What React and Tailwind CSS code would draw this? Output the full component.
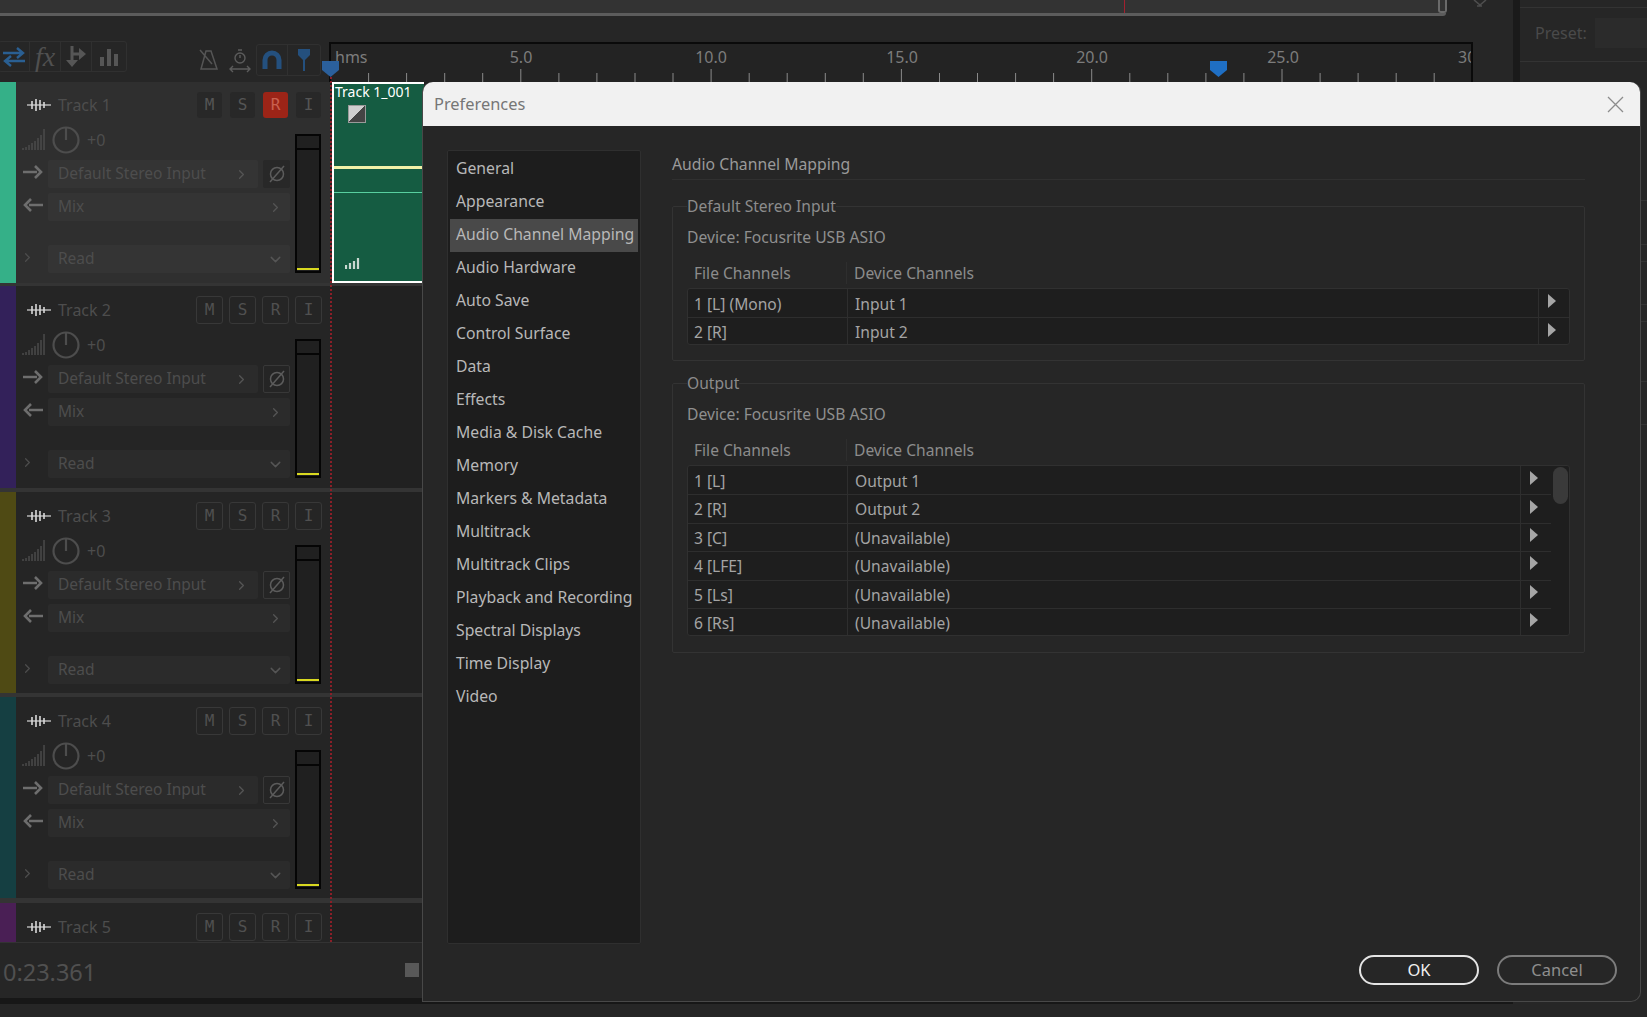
import React from "react";
import { ChevronRight, ChevronDown } from "lucide-react";

const prefs = ["General","Appearance","Audio Channel Mapping","Audio Hardware","Auto Save","Control Surface","Data","Effects","Media & Disk Cache","Memory","Markers & Metadata","Multitrack","Multitrack Clips","Playback and Recording","Spectral Displays","Time Display","Video"];

function Wave() {
  return (
    <svg width="24" height="14" viewBox="0 0 24 14" className="shrink-0">
      <path d="M0 7H24" stroke="#d8d8d8" strokeWidth="1.2" />
      <path d="M5 3V11M9 1V13M13 2V12M17 4V10" stroke="#d8d8d8" strokeWidth="1.6" />
    </svg>
  );
}
function Stairs() {
  return (
    <svg width="24" height="23" viewBox="0 0 24 23" className="shrink-0">
      <path d="M1 22V20M4 22V19M7 22V17M10 22V15M13 22V13M16 22V10M19 22V7M22 22V1" stroke="#4d4d4d" strokeWidth="1.4" />
    </svg>
  );
}
function Knob() {
  return (
    <svg width="28" height="28" viewBox="0 0 28 28" className="shrink-0">
      <circle cx="14" cy="14" r="12.5" fill="none" stroke="#4d4d4d" strokeWidth="2.2" />
      <path d="M14 2V14" stroke="#4d4d4d" strokeWidth="2.2" />
    </svg>
  );
}
function Arrow({ left }) {
  return (
    <svg width="20" height="14" viewBox="0 0 20 14" className="mb-[4px] shrink-0">
      {left ? <path d="M20 7H6M8 1L2 7L8 13" fill="none" stroke="#6e6e6e" strokeWidth="2.6" /> : <path d="M0 7H14M12 1L18 7L12 13" fill="none" stroke="#6e6e6e" strokeWidth="2.6" />}
    </svg>
  );
}
function Phase() {
  return (
    <svg width="18" height="18" viewBox="0 0 18 18">
      <circle cx="9" cy="9" r="6.5" fill="none" stroke="#5c5c5c" strokeWidth="1.5" />
      <path d="M2 17L16 1" stroke="#5c5c5c" strokeWidth="1.5" />
    </svg>
  );
}

function MsriButton({ label, active, armed }) {
  const font = "font-['DejaVu_Sans_Mono',monospace] text-[16px]";
  if (armed) return <div className={"mx-[1px] flex h-[26px] w-[25px] items-center justify-center rounded-[3px] bg-[#9c2417] text-[#c9604f] " + font}>{label}</div>;
  if (active) return <div className={"mx-[1px] flex h-[26px] w-[25px] items-center justify-center rounded-[3px] bg-[#282828] text-[#555555] " + font}>{label}</div>;
  return <div className={"flex h-[28px] w-[27px] items-center justify-center rounded-[3px] border border-[#383838] text-[#505050] " + font}>{label}</div>;
}

function Track({ name, color, height, active, compact, children }) {
  const field = active ? "bg-[#343434]" : "bg-[#2b2b2b]";
  return (
    <div className={"shrink-0 overflow-hidden " + height}>
      <div className="flex h-full">
        <div className={"w-[16px] shrink-0 " + color} />
        <div className={"w-[314px] shrink-0 overflow-hidden pl-[7px] " + (active ? "bg-[#2f2f2f] pt-[9px]" : "bg-[#252525] pt-[10px]")}>
          <div className="flex h-[28px] items-center">
            <div className="ml-[4px]"><Wave /></div>
            <div className="ml-[7px] flex-1 text-[16px] text-[#4d4d4d]">{name}</div>
            <div className="flex gap-[6px] pr-[8px]">
              <MsriButton label="M" active={active} />
              <MsriButton label="S" active={active} />
              <MsriButton label="R" active={active} armed={active} />
              <MsriButton label="I" active={active} />
            </div>
          </div>
          {!compact && (
            <div className="flex">
              <div className="w-[267px] shrink-0">
                <div className="flex h-[41px] items-center">
                  <div className="ml-[-1px]"><Stairs /></div>
                  <div className="ml-[6px]"><Knob /></div>
                  <div className="ml-[7px] text-[16px] text-[#4d4d4d]">+0</div>
                </div>
                <div className="flex h-[28px] items-center">
                  <Arrow />
                  <div className={"ml-[5px] flex h-[28px] w-[210px] items-center justify-between rounded-[2px] pl-[10px] pr-[9px] text-[15.5px] text-[#4d4d4d] " + field}>
                    <span>Default Stereo Input</span>
                    <ChevronRight size={15} color="#555555" />
                  </div>
                  <div className={"ml-[5px] flex h-[28px] w-[27px] items-center justify-center rounded-[2px] " + (active ? "bg-[#282828]" : "border border-[#383838]")}><Phase /></div>
                </div>
                <div className="mt-[5px] flex h-[28px] items-center">
                  <Arrow left />
                  <div className={"ml-[5px] flex h-[28px] w-[243px] items-center justify-between rounded-[2px] pl-[10px] pr-[7px] text-[15.5px] text-[#4d4d4d] " + field}>
                    <span>Mix</span>
                    <ChevronRight size={15} color="#555555" />
                  </div>
                </div>
                <div className="mt-[24px] flex h-[28px] items-center">
                  <ChevronRight size={15} color="#4d4d4d" className="ml-[-3px] mb-[4px]" />
                  <div className={"ml-[13px] flex h-[28px] w-[243px] items-center justify-between rounded-[2px] pl-[10px] pr-[6px] text-[15.5px] text-[#4d4d4d] " + field}>
                    <span>Read</span>
                    <ChevronDown size={17} color="#555555" />
                  </div>
                </div>
              </div>
              <div className="ml-[5px] mt-[15px] flex h-[139px] w-[26px] shrink-0 flex-col border-2 border-[#050505] bg-[#202020]">
                <div className="box-content h-[12px] border-b-2 border-[#050505]" />
                <div className="flex-1" />
                <div className="mb-[1px] h-[2px] bg-[#d8d820]" />
              </div>
            </div>
          )}
        </div>
        <div className="relative min-w-0 flex-1 bg-[#212121]">{children}</div>
      </div>
    </div>
  );
}

function Sep({ h }) {
  return <div className={"shrink-0 bg-[#343434] " + h} />;
}

function ArrowCell({ className }) {
  return (
    <div className={"flex items-center justify-start border-l border-[#2e2e2e] " + className}>
      <svg width="8" height="14" viewBox="0 0 8 14" className="mb-[5px]"><path d="M0 0L8 7L0 14Z" fill="#a6a6a6" /></svg>
    </div>
  );
}

function MapTable({ rows, arrowW, scroll, h }) {
  return (
    <div className={"relative mt-[4px] overflow-hidden rounded-[3px] border border-[#303030] bg-[#1e1e1e] " + h}>
      <div className={scroll ? "mr-[18px]" : ""}>
        {rows.map((r, i) => (
          <div key={r[0]} className={"flex h-[28.4px] items-center text-[15.6px] text-[#a4a4a4] " + (i ? "border-t border-[#2e2e2e]" : "")}>
            <div className="flex h-full w-[159px] shrink-0 items-center pl-[6px] pt-[2px]">{r[0]}</div>
            <div className="flex h-full min-w-0 flex-1 items-center border-l border-[#2e2e2e] pl-[7px] pt-[2px]">{r[1]}</div>
            <ArrowCell className={"h-full shrink-0 " + arrowW} />
          </div>
        ))}
      </div>
      {scroll && <div className="absolute right-[1px] top-[1px] h-[37px] w-[15px] rounded-full bg-[#3a3a3a]" />}
    </div>
  );
}

function Group({ legend, rows, arrowW, scroll, h, tableH, mt }) {
  return (
    <fieldset className={"rounded-[2px] border border-[#333333] px-[14px] " + h + " " + mt}>
      <legend className="text-[15.6px] leading-[22px] text-[#8c8c8c]">{legend}</legend>
      <div className="mt-[9px] text-[15.7px] leading-[22px] text-[#8f8f8f]">Device: Focusrite USB ASIO</div>
      <div className="mt-[14px] flex h-[22px] text-[15.6px] leading-[22px] text-[#8c8c8c]">
        <div className="w-[159px] pl-[7px]">File Channels</div>
        <div className="border-l border-[#2e2e2e] pl-[7px]">Device Channels</div>
      </div>
      <MapTable rows={rows} arrowW={arrowW} scroll={scroll} h={tableH} />
    </fieldset>
  );
}

export default function App() {
  const ticks = Array.from({ length: 30 }, (_, i) => i + 1);
  return (
    <div className="relative flex h-[1017px] w-[1647px] flex-col overflow-hidden bg-[#262626] font-['Noto_Sans',sans-serif]">
      <div className="flex min-h-0 flex-1">
        {/* left work area */}
        <div className="flex w-[1513px] shrink-0 flex-col">
          {/* top scroll strip */}
          <div className="relative h-[16px] shrink-0 bg-[#262626]">
            <div className="h-[16px] w-[1446px] rounded-br-[3px] border-b-[3px] border-[#5c5c5c] bg-[#333333]" />
            <div className="absolute left-[1124px] top-0 h-[13px] w-[1px] bg-[#a3202f]" />
            <div className="absolute left-[1438px] top-0 h-[13px] w-[9px] rounded-b-[3px] border-x-2 border-b-2 border-[#6a6a6a]" />
            <svg width="16" height="8" viewBox="0 0 16 8" className="absolute left-[1472px] top-0"><path d="M2 0L8 5L14 0M5 6H10" stroke="#4e4e4e" strokeWidth="1.6" fill="none" /></svg>
          </div>
          {/* toolbar + ruler */}
          <div className="flex h-[66px] shrink-0">
            <div className="relative w-[329px] shrink-0">
              <div className="absolute left-[-2px] top-[25px] flex h-[31px] rounded-[3px] border border-[#303030]">
                <div className="flex w-[31px] items-center justify-center border-r border-[#303030]">
                  <svg width="24" height="22" viewBox="0 0 24 22"><path d="M1 7H20M15 2L21 7L15 12" fill="none" stroke="#2a5f92" strokeWidth="2.4" /><path d="M23 15H4M9 10L3 15L9 20" fill="none" stroke="#2a5f92" strokeWidth="2.4" /></svg>
                </div>
                <div className="flex w-[31px] items-center justify-center border-r border-[#303030] font-['Liberation_Serif',serif] text-[28px] italic text-[#505050]">fx</div>
                <div className="flex w-[31px] items-center justify-center border-r border-[#303030]">
                  <svg width="22" height="22" viewBox="0 0 22 22"><path d="M7 0V17" stroke="#565656" strokeWidth="3" /><path d="M1 14L7 21L13 14Z" fill="#565656" /><path d="M7 8H15" stroke="#565656" strokeWidth="3" /><path d="M14 2L21 8L14 14Z" fill="#565656" /></svg>
                </div>
                <div className="flex w-[34px] items-center justify-center">
                  <svg width="18" height="18" viewBox="0 0 18 18"><path d="M0 9H4V18H0ZM7 1H11V18H7ZM14 6H18V18H14Z" fill="#565656" /></svg>
                </div>
              </div>
              <svg width="20" height="22" viewBox="0 0 20 22" className="absolute left-[199px] top-[33px]"><path d="M7 2H12L18 20H2Z M1 1L13 15" fill="none" stroke="#555555" strokeWidth="1.5" /></svg>
              <svg width="22" height="24" viewBox="0 0 22 24" className="absolute left-[229px] top-[33px]"><circle cx="11" cy="9" r="5" fill="none" stroke="#5c5c5c" strokeWidth="1.4" /><path d="M9 1H13M11 6V9M1 20H21M4 17L1 20L4 23M18 17L21 20L18 23" fill="none" stroke="#5c5c5c" strokeWidth="1.4" /></svg>
              <div className="absolute left-[256px] top-[28px] flex h-[32px] rounded-[3px] border border-[#303030]">
                <div className="flex w-[31px] items-center justify-center border-r border-[#303030]">
                  <svg width="20" height="20" viewBox="0 0 20 20"><path d="M3 19V10A7 7 0 0 1 17 10V19" fill="none" stroke="#24507e" strokeWidth="5" /></svg>
                </div>
                <div className="flex w-[32px] items-center justify-center">
                  <svg width="14" height="22" viewBox="0 0 14 22"><path d="M1 0H13V6L8 11H6L1 6Z" fill="#24507e" /><path d="M7 10V22" stroke="#24507e" strokeWidth="2" /></svg>
                </div>
              </div>
            </div>
            <div className="relative mt-[26px] h-[40px] w-[1144px] shrink-0 border-x-[2px] border-t-[2px] border-x-[#0a0a0a] border-t-[#0a0a0a] bg-[#232323] text-[16px] text-[#7c7c7c]">
              <span className="absolute left-[4px] top-[1px]">hms</span>
              {[["5.0", 190], ["10.0", 380], ["15.0", 571], ["20.0", 761], ["25.0", 952]].map(([t, x]) => (
                <span key={t} className="absolute top-[1px] w-[60px] -translate-x-1/2 text-center" style={{ left: x }}>{t}</span>
              ))}
              <span className="absolute right-0 top-[1px] w-[13px] overflow-hidden">30</span>
              <svg width="1140" height="14" viewBox="0 0 1140 14" className="absolute bottom-0 left-0">
                {ticks.map((k) => (
                  <path key={k} d={`M${(k * 38.06 - 0.5).toFixed(1)} ${k % 5 === 0 ? 1 : 5}V14`} stroke="#8a8a8a" strokeWidth="1" />
                ))}
              </svg>
            </div>
          </div>
          {/* tracks */}
          <div className="flex h-[860px] shrink-0 flex-col overflow-hidden">
            <Track name="Track 1" color="bg-[#35b088]" height="h-[201px]" active>
              <div className="relative ml-[2px] h-full w-[92px] border-y-2 border-l-2 border-white bg-[#155c42]">
                <div className="absolute left-[1px] top-[-2px] whitespace-nowrap text-[14px] leading-[20px] text-white">Track 1_001</div>
                <div className="absolute left-[14px] top-[21px] h-[18px] w-[18px] border border-[#9a9a9a] bg-[linear-gradient(135deg,#cfcfcf_50%,#444444_50%)]" />
                <div className="absolute left-0 top-[82px] h-[3px] w-full bg-[#f1f1a8]" />
                <div className="absolute left-0 top-[108px] h-[1px] w-full bg-[#58d0a0]" />
                <svg width="16" height="12" viewBox="0 0 16 12" className="absolute bottom-[12px] left-[11px]"><path d="M1 12V8M5 12V6M9 12V4M13 12V1" stroke="#c8d8d0" strokeWidth="2.2" /></svg>
              </div>
            </Track>
            <Sep h="h-[3px]" />
            <Track name="Track 2" color="bg-[#33215a]" height="h-[202px]" />
            <Sep h="h-[4px]" />
            <Track name="Track 3" color="bg-[#4f4a14]" height="h-[201px]" />
            <Sep h="h-[4px]" />
            <Track name="Track 4" color="bg-[#153f42]" height="h-[201px]" />
            <Sep h="h-[5px]" />
            <Track name="Track 5" color="bg-[#4a1f55]" height="h-[39px]" compact />
          </div>
          {/* time */}
          <div className="flex h-[56px] shrink-0 items-center justify-between border-t border-[#333333] bg-[#262626] pl-[3px]">
            <span className="pt-[4px] text-[23.5px] text-[#505050]">0:23.361</span>
            <div className="mb-[2px] mr-[1094px] h-[14px] w-[14px] bg-[#585858]" />
          </div>
          <div className="h-[6px] shrink-0 bg-[#171717]" />
          <div className="flex-1 bg-[#262626]" />
        </div>
        {/* divider and right panel */}
        <div className="h-[82px] w-[7px] shrink-0 bg-[#1a1a1a]" />
        <div className="flex-1">
          <div className="mt-[7px] flex h-[55px] items-center border-y border-[#333333] pb-[3px] pl-[15px] text-[16px] text-[#4a4a4a]">
            <span>Preset:</span>
            <div className="ml-[8px] h-[30px] flex-1 bg-[#2b2b2b]" />
          </div>
          <div className="h-[139px] border-b border-[#333333]" />
          <div className="h-[44px] border-b border-[#333333]" />
          <div className="h-[17px] border-b border-[#333333]" />
          <div className="h-[43px] border-b border-[#333333]" />
          <div className="h-[17px] border-b border-[#333333]" />
          <div className="h-[60px] border-b border-[#333333]" />
          <div className="h-[43px] border-b border-[#333333]" />
        </div>
      </div>

      {/* playhead */}
      <div className="absolute left-[330px] top-[74px] h-[868px] border-l-[2px] border-dotted border-[#8a1f28]" />
      <svg width="17" height="16" viewBox="0 0 17 16" className="absolute left-[322px] top-[61px]"><path d="M0 0H17V9L8.5 16L0 9Z" fill="#2b609c" /></svg>
      <svg width="17" height="16" viewBox="0 0 17 16" className="absolute left-[1210px] top-[61px]"><path d="M0 0H17V9L8.5 16L0 9Z" fill="#1f6fc4" /></svg>

      {/* dialog */}
      <div className="absolute left-[422px] top-[82px] flex h-[920px] w-[1219px] flex-col rounded-t-[10px] rounded-br-[10px] border-x border-b border-[#484848] bg-[#262626]">
        <div className="flex h-[44px] shrink-0 items-center justify-between rounded-t-[10px] bg-[#f1f1f1] pl-[11px] pr-[16px]">
          <span className="text-[16.4px] text-[#767676]">Preferences</span>
          <svg width="17" height="17" viewBox="0 0 17 17"><path d="M1 1L16 16M16 1L1 16" stroke="#8c8c8c" strokeWidth="1.3" /></svg>
        </div>
        <div className="flex pl-[24px] pt-[24px]">
          <div className="h-[794px] w-[194px] shrink-0 rounded-[2px] border border-[#2f2f2f] bg-[#1d1d1d] p-[2px]">
            {prefs.map((p) => (
              <div key={p} className={"flex h-[33px] items-center whitespace-nowrap pb-[2px] pl-[6px] text-[15.75px] text-[#b8b8b8] " + (p === "Audio Channel Mapping" ? "bg-[#494949]" : "")}>{p}</div>
            ))}
          </div>
          <div className="ml-[31px] w-[913px] shrink-0">
            <div className="flex h-[30px] items-center border-b border-[#303030] text-[15.75px] text-[#9a9a9a]">Audio Channel Mapping</div>
            <Group
              legend="Default Stereo Input"
              mt="mt-[15px]"
              h="h-[166px]"
              tableH="h-[57px] w-[883px]"
              arrowW="w-[31px] pl-[9px]"
              rows={[["1 [L] (Mono)", "Input 1"], ["2 [R]", "Input 2"]]}
            />
            <Group
              legend="Output"
              mt="mt-[11px]"
              h="h-[281px]"
              tableH="h-[171px] w-[883px]"
              arrowW="w-[31px] pl-[9px]"
              scroll
              rows={[["1 [L]", "Output 1"], ["2 [R]", "Output 2"], ["3 [C]", "(Unavailable)"], ["4 [LFE]", "(Unavailable)"], ["5 [Ls]", "(Unavailable)"], ["6 [Rs]", "(Unavailable)"]]}
            />
          </div>
        </div>
        <div className="mt-[11px] flex justify-end gap-[18px] pr-[23px]">
          <div className="flex h-[30px] w-[120px] items-center justify-center rounded-full border-2 border-[#e4e4e4] text-[16.5px] text-[#f0f0f0]">OK</div>
          <div className="flex h-[30px] w-[120px] items-center justify-center rounded-full border-2 border-[#7c7c7c] text-[16.5px] text-[#8e8e8e]">Cancel</div>
        </div>
      </div>
    </div>
  );
}
